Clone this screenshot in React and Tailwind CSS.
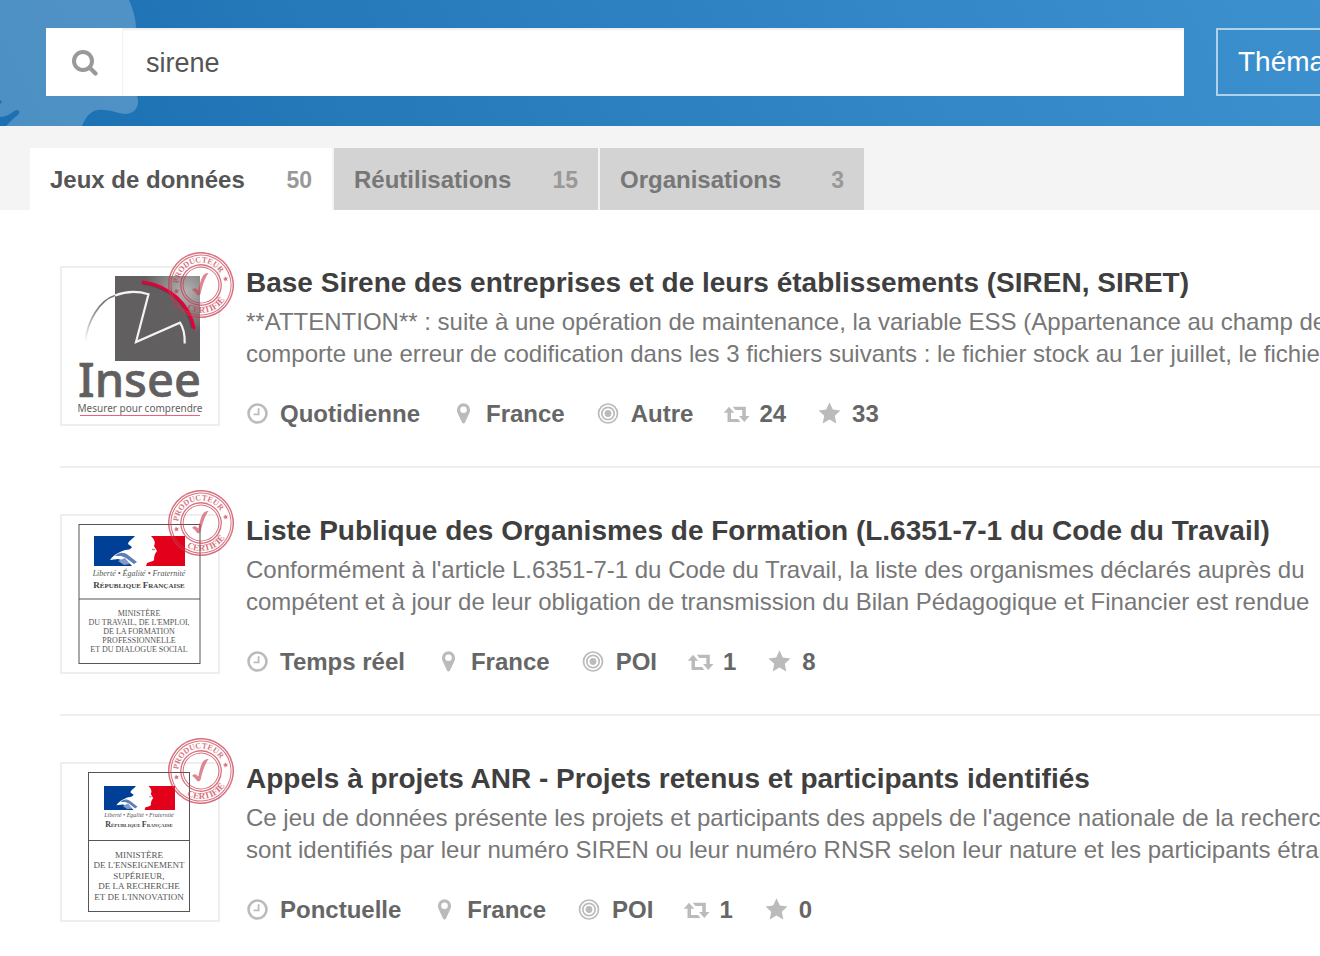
import React from "react";

const TABS = [
  { label: "Jeux de données", count: 50, active: true },
  { label: "Réutilisations", count: 15 },
  { label: "Organisations", count: 3 },
];

function ClockIcon() {
  return (
    <svg viewBox="0 0 24 24" className="size-6 shrink-0" fill="none" stroke="#bbb" aria-hidden="true">
      <circle cx="11.5" cy="11.5" r="9" strokeWidth="2.6" />
      <path d="M12.6 6.300V12.400H7.600" strokeWidth="1.800" />
    </svg>
  );
}

function PinIcon() {
  return (
    <svg viewBox="0 0 24 24" className="size-6 shrink-0" fill="#bbb" aria-hidden="true">
      <path
        fillRule="evenodd"
        d="M11.500 1.200A6.600 6.600 0 0 0 4.900 7.800C4.900 9.100 5.200 10.200 5.700 11.200L10 20.600C10.600 21.900 12.400 21.900 13 20.600L17.300 11.200C17.800 10.200 18.100 9.100 18.100 7.800A6.600 6.600 0 0 0 11.500 1.200zM11.500 4.500A3.300 3.300 0 1 1 11.500 11.100 3.300 3.300 0 0 1 11.500 4.500z"
      />
    </svg>
  );
}

function TargetIcon() {
  return (
    <svg viewBox="0 0 24 24" className="size-6 shrink-0" fill="none" stroke="#bbb" strokeWidth="1.700" aria-hidden="true">
      <circle cx="11" cy="11.500" r="9.500" />
      <circle cx="11" cy="11.500" r="6.200" />
      <circle cx="11" cy="11.500" r="3.400" fill="#bbb" stroke="none" />
    </svg>
  );
}

function ReuseIcon() {
  return (
    <svg viewBox="0 0 24 24" className="size-6 shrink-0 overflow-visible" fill="#bbb" aria-hidden="true">
      <path d="M4 4.700 9.200 10.800H6V16.900H13L15.500 20.100H2.500V10.800H-1.200z" />
      <path d="M19.300 20.100 14.100 14H17.300V7.900H10.300L7.800 4.700H20.800V14H24.500z" />
    </svg>
  );
}

function StarIcon() {
  return (
    <svg viewBox="0 0 24 24" className="size-6 shrink-0" fill="#bbb" aria-hidden="true">
      <path d="M11.500 .3 14.800 7.600 22.500 8.400 16.800 13.700 18.300 21.400 11.500 17.600 4.700 21.400 6.200 13.700 .5 8.400 8.200 7.600z" />
    </svg>
  );
}

function Stamp({ id, raised }) {
  return (
    <svg
      viewBox="-33 -33 66 66"
      className={raised ? "absolute -right-3.5 -top-6 size-[66px] opacity-70" : "absolute -right-3.5 -top-3.5 size-[66px] opacity-70"}
      role="img"
      aria-label="Producteur certifié"
    >
      <g transform="rotate(-14)" fill="#c9374b">
        <g fill="none" stroke="#c9374b">
          <circle r="32.200" strokeWidth="1.500" />
          <circle r="30" strokeWidth="1" />
          <circle r="20.200" strokeWidth="1.300" />
          <circle r="17.900" strokeWidth="1" />
        </g>
        <path id={`${id}-top`} d="M-22.600 0A22.600 22.600 0 0 1 22.600 0" fill="none" />
        <path id={`${id}-bottom`} d="M-28 0A28 28 0 0 0 28 0" fill="none" />
        <g fontFamily="Liberation Serif, serif" fontWeight="700" textAnchor="middle">
          <text fontSize="8">
            <textPath href={`#${id}-top`} startOffset="50%">PRODUCTEUR</textPath>
          </text>
          <text fontSize="9">
            <textPath href={`#${id}-bottom`} startOffset="50%">CERTIFIÉ</textPath>
          </text>
        </g>
        <path d="M25.300-2.600l.8 1.700 1.800.2-1.300 1.300.3 1.800-1.600-.9-1.600.9.3-1.800-1.300-1.300 1.800-.2z" />
        <path d="M-25.300-2.600l.8 1.700 1.800.2-1.300 1.300.3 1.800-1.600-.9-1.600.9.3-1.800-1.300-1.300 1.800-.2z" />
      </g>
      <path
        d="M-9 5C-7.500 2.800-5.500 2.900-4.200 4.200L-2.700 5.500C-1.300-1-.2-6 2-9.300 3.500-11.500 5.500-12.300 7.600-12 4-7.500 1.400.5-.4 8.800-1.200 10.600-3.300 10.800-4.300 9.500-5.500 7.500-6.800 6-9 5z"
        fill="#c9374b"
        opacity=".85"
      />
    </svg>
  );
}

function InseeLogo() {
  return (
    <svg viewBox="0 0 160 160" className="size-40" role="img" aria-label="Insee">
      <defs>
        <radialGradient id="insee-glow" cx="125" cy="26" r="42" gradientUnits="userSpaceOnUse">
          <stop offset="0" stopColor="#b5b3b3" />
          <stop offset="1" stopColor="#625f60" />
        </radialGradient>
        <linearGradient id="insee-fade" x1="32" y1="78" x2="44" y2="40" gradientUnits="userSpaceOnUse">
          <stop offset="0" stopColor="#777" stopOpacity="0" />
          <stop offset="1" stopColor="#777" />
        </linearGradient>
      </defs>
      <path d="M55 10H140V95H55z" fill="#625f60" />
      <path d="M82 10H140V66H135C130 42 112 20 82 16z" fill="url(#insee-glow)" />
      <path d="M82 17.500C108 21 127 36 132 62" fill="none" stroke="#333" strokeWidth="2" opacity=".5" />
      <path d="M83 16C110 20 129 38 134 62" fill="none" stroke="#e4003a" strokeWidth="3.200" strokeLinecap="round" />
      <path d="M25.500 76C27 55 40 34 55 29.500" fill="none" stroke="url(#insee-fade)" strokeWidth="1.800" />
      <path d="M55 29.500C65 25.500 78 25 88.500 28.300L76 76 120 56.700C123.500 62 125 69 124.700 77.500" fill="none" stroke="#f3f3f3" strokeWidth="2.200" />
      <g fill="#625f60" fontFamily="Noto Sans, sans-serif">
        <text x="18" y="131" fontSize="47" fontWeight="500" stroke="#625f60" strokeWidth=".6">Insee</text>
        <text x="80" y="146" fontSize="10" textAnchor="middle">Mesurer pour comprendre</text>
      </g>
      <path d="M20 149.500H140" stroke="#ee5f80" />
    </svg>
  );
}

function Flag({ x, y, width, height }) {
  return (
    <svg x={x} y={y} width={width} height={height} viewBox="0 0 91 30" preserveAspectRatio="none">
      <path d="M0 0H41C39 3 34 5 34 8L38 11C37 13 35 14 31 14 26 16 20 18 16 24L24 23C29 24 35 26 38 30H0z" fill="#003f96" />
      <path d="M21 20C25 16 30 16 34 19L43 26 40 28 32 22 27 20z" fill="#5c7fb6" />
      <path d="M24 25L31 22 36 28 30 29z" fill="#7f9bc6" />
      <path d="M57 0H91V30H52L53 27C57 25 61 26 60 22L61 18 63 15 60 10C62 6 60 3 57 0z" fill="#e2001a" />
      <path d="M58 13.500h3" stroke="#999" strokeWidth="1.500" />
    </svg>
  );
}

function MinistryLogo({ frame, divider, flag, mottoY, nameY, motto, name, smallName, lines, firstLine, step, size }) {
  return (
    <svg viewBox="0 0 160 160" className="size-40" role="img" aria-label="République Française">
      <rect {...frame} fill="#fff" stroke="#555" />
      <path d={divider} stroke="#555" />
      <Flag {...flag} />
      <g fontFamily="Liberation Serif, serif" textAnchor="middle">
        <text x="79" y={mottoY} fontSize={motto} fontStyle="italic" fill="#555">
          Liberté • Égalité • Fraternité
        </text>
        <text x="79" y={nameY} fontSize={name} fontWeight="700" fill="#444">
          R<tspan fontSize={smallName}>ÉPUBLIQUE </tspan>F<tspan fontSize={smallName}>RANÇAISE</tspan>
        </text>
        <g fontSize={size} fill="#555">
          {lines.map((line, i) => (
            <text key={line} x="79" y={firstLine + i * step}>{line}</text>
          ))}
        </g>
      </g>
    </svg>
  );
}

const RESULTS = [
  {
    title: "Base Sirene des entreprises et de leurs établissements (SIREN, SIRET)",
    lines: [
      "**ATTENTION** : suite à une opération de maintenance, la variable ESS (Appartenance au champ de",
      "comporte une erreur de codification dans les 3 fichiers suivants : le fichier stock au 1er juillet, le fichier",
    ],
    frequency: "Quotidienne",
    zone: "France",
    granularity: "Autre",
    reuses: 24,
    stars: 33,
    logo: <InseeLogo />,
  },
  {
    title: "Liste Publique des Organismes de Formation (L.6351-7-1 du Code du Travail)",
    lines: [
      "Conformément à l'article L.6351-7-1 du Code du Travail, la liste des organismes déclarés auprès du",
      "compétent et à jour de leur obligation de transmission du Bilan Pédagogique et Financier est rendue",
    ],
    frequency: "Temps réel",
    zone: "France",
    granularity: "POI",
    reuses: 1,
    stars: 8,
    logo: (
      <MinistryLogo
        frame={{ x: 19, y: 10.5, width: 121, height: 139 }}
        divider="M19 85H140"
        flag={{ x: 34, y: 22, width: 91, height: 30 }}
        mottoY={62}
        nameY={74}
        motto={8}
        name={9}
        smallName={7}
        lines={["MINISTÈRE", "DU TRAVAIL, DE L'EMPLOI,", "DE LA FORMATION", "PROFESSIONNELLE", "ET DU DIALOGUE SOCIAL"]}
        firstLine={102}
        step={9}
        size={8}
      />
    ),
  },
  {
    title: "Appels à projets ANR - Projets retenus et participants identifiés",
    lines: [
      "Ce jeu de données présente les projets et participants des appels de l'agence nationale de la recherche",
      "sont identifiés par leur numéro SIREN ou leur numéro RNSR selon leur nature et les participants étrangers",
    ],
    frequency: "Ponctuelle",
    zone: "France",
    granularity: "POI",
    reuses: 1,
    stars: 0,
    logo: (
      <MinistryLogo
        frame={{ x: 28.5, y: 10.5, width: 101, height: 139 }}
        divider="M28 78.500H130"
        flag={{ x: 44, y: 24, width: 71, height: 24 }}
        mottoY={55}
        nameY={65}
        motto={6}
        name={8}
        smallName={5}
        lines={["MINISTÈRE", "DE L'ENSEIGNEMENT", "SUPÉRIEUR,", "DE LA RECHERCHE", "ET DE L'INNOVATION"]}
        firstLine={95.5}
        step={10.6}
        size={9}
      />
    ),
  },
];

function Meta({ icon, children }) {
  return (
    <li className="flex items-center gap-[10px]">
      {icon}
      <span>{children}</span>
    </li>
  );
}

function Result({ item, index }) {
  return (
    <li className="flex gap-[26px] border-b-2 border-[#eee] pb-10 pt-[46px] last:border-b-0">
      <div className="relative size-40 shrink-0">
        <div className="absolute inset-0 border-2 border-[#eee]" />
        <div className="relative">{item.logo}</div>
        <Stamp id={`stamp-${index}`} raised={index > 0} />
      </div>
      <div className="min-w-0 flex-1 whitespace-nowrap">
        <h2 className="text-[28px] font-bold leading-[34px] text-[#3f3f3f]">
          <a href="#">{item.title}</a>
        </h2>
        <p className="mt-1.5 text-[24px] leading-8 text-[#777]">
          {item.lines.map((line) => (
            <span key={line} className="block">{line}</span>
          ))}
        </p>
        <ul className="mt-8 flex gap-8 text-[24px] font-bold leading-6 text-[#666]">
          <Meta icon={<ClockIcon />}>{item.frequency}</Meta>
          <Meta icon={<PinIcon />}>{item.zone}</Meta>
          <Meta icon={<TargetIcon />}>{item.granularity}</Meta>
          <Meta icon={<ReuseIcon />}>{item.reuses}</Meta>
          <Meta icon={<StarIcon />}>{item.stars}</Meta>
        </ul>
      </div>
    </li>
  );
}

export default function App() {
  return (
    <div className="min-h-screen overflow-hidden bg-white font-['Liberation_Sans',Arial,sans-serif]">
      <header className="relative overflow-hidden bg-linear-[65deg,#1b70b2,#2579b9_25%,#3488c7_72%,#3d90ce] pb-[30px] pl-[46px] pt-7">
        <svg viewBox="0 0 140 126" className="absolute left-0 top-0 h-[126px] w-[140px]" fill="#fff" fillOpacity=".22" aria-hidden="true">
          <path d="M0 0H129C133 9 136 20 136 28V94C138 97 138 100 138 103 137 110 132 114 125 114 116 113 108 109 98 110 90 111 86 117 82 126H6L14 118C20 114 21 111 17 110 12 111 9 117 0 117V104L2 102 0 100z" />
        </svg>
        <div className="relative flex gap-8">
          <form className="flex h-[68px] min-w-0 flex-1 bg-white" onSubmit={(e) => e.preventDefault()}>
            <button type="submit" aria-label="Rechercher" className="flex w-[76px] shrink-0 items-center justify-center">
              <svg viewBox="0 0 28 28" className="size-7" fill="none" stroke="#999" strokeLinecap="round" aria-hidden="true">
                <circle cx="13" cy="13" r="9" strokeWidth="4" />
                <path d="M19.800 19.800 25.500 25.500" strokeWidth="4.200" />
              </svg>
            </button>
            <input
              type="text"
              aria-label="Recherche"
              defaultValue="sirene"
              className="min-w-0 flex-1 border-l border-[#f4f4f4] px-[23px] pt-0.5 text-[27px] text-[#555] shadow-[inset_0_2px_2px_rgba(0,0,0,0.07)] outline-none"
            />
          </form>
          <div className="w-[104px] shrink-0 overflow-hidden">
            <button type="button" className="h-[68px] whitespace-nowrap border-2 border-white/60 px-5 text-[28px] text-white">
              Thématiques
            </button>
          </div>
        </div>
      </header>

      <nav className="flex gap-[2px] bg-[#f4f4f4] pl-[30px] pt-[22px]">
        {TABS.map((tab) => (
          <a
            key={tab.label}
            href="#"
            className={
              tab.active
                ? "flex h-[62px] w-[302px] items-center justify-between bg-white px-5 pt-0.5 text-[24px] font-bold text-[#555]"
                : "flex h-[62px] w-[264px] items-center justify-between bg-[#d3d3d3] px-5 pt-0.5 text-[24px] font-bold text-[#777]"
            }
          >
            {tab.label}
            <span className="text-[23px] text-[#999]">{tab.count}</span>
          </a>
        ))}
      </nav>

      <main className="pl-[60px] pt-[10px]">
        <ul>
          {RESULTS.map((item, index) => (
            <Result key={item.title} item={item} index={index} />
          ))}
        </ul>
      </main>
    </div>
  );
}
